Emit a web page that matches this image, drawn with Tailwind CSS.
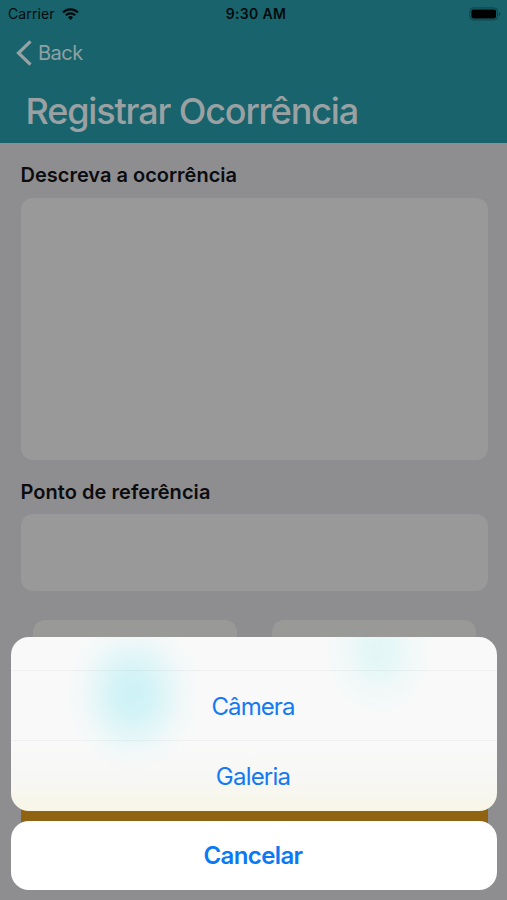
<!DOCTYPE html>
<html lang="pt-BR">
<head>
    <meta charset="UTF-8">
    <meta name="viewport" content="width=device-width, initial-scale=1.0">
    <title>Registrar Ocorrência</title>
    <script src="https://cdn.jsdelivr.net/npm/@tailwindcss/browser@4"></script>
</head>
<body class="bg-[#8e8e91] font-['Inter','Liberation_Sans',sans-serif]">
    <div class="relative w-[507px] h-[900px] overflow-hidden">
        <!-- Header -->
        <header class="h-[143px] bg-[#19646c]">
            <!-- Status bar -->
            <div class="grid grid-cols-3 items-center h-[27px] pl-2 pr-[6px] text-[14px] text-[#020b0d]">
                <div class="flex items-center gap-[7px]">
                    <span class="tracking-[0.1px]">Carrier</span>
                    <svg class="w-[17px] h-3" viewBox="0 0 17 12" fill="none" stroke="#020b0d" stroke-width="2.2">
                        <path d="M1 4.5a10.6 10.6 0 0 1 15 0"/>
                        <path d="M3.8 7.3a6.7 6.7 0 0 1 9.4 0"/>
                        <path d="M8.5 12L5.9 9.4a3.7 3.7 0 0 1 5.2 0z" fill="#020b0d" stroke="none"/>
                    </svg>
                </div>
                <span class="text-center font-semibold tracking-[0.3px] pl-[3px]">9:30 AM</span>
                <svg class="w-[32px] h-[14px] justify-self-end" viewBox="0 0 32 14">
                    <rect x="0.9" y="0.9" width="27.7" height="12" rx="3.4" fill="none" stroke="#0e4148" stroke-width="1"/>
                    <rect x="2.4" y="2.4" width="24.7" height="9" rx="1.8" fill="#000"/>
                    <path d="M30 5v4q1.4-.6 1.4-2T30 5z" fill="#0e4148"/>
                </svg>
            </div>
            <a href="#" class="flex items-center h-[51px] pl-4 gap-[6px] text-[20px] text-[#8fa0a4]">
                <svg class="w-4 h-[26px]" viewBox="0 0 16 26" fill="none" stroke="#97a2a5" stroke-width="3.2">
                    <path d="M14.5 1.4L2.5 13l12 11.6"/>
                </svg>
                <span class="tracking-[-0.5px]">Back</span>
            </a>
            <h1 class="pl-[25.5px] mt-[10px] text-[36px] leading-[46px] tracking-[-1.15px] font-[450] text-[#9ba1a3] whitespace-nowrap">Registrar Ocorrência</h1>
        </header>

        <!-- Form -->
        <main class="pl-[20.5px] pr-[19.5px] pt-[18px]">
            <h2 class="h-[28px] text-[20px] leading-[28px] font-semibold text-[#0c0c0e] whitespace-nowrap">Descreva a ocorrência</h2>
            <div class="mt-[9px] h-[262px] rounded-[12px] bg-[#999999]"></div>
            <h2 class="mt-[18px] h-[28px] text-[20px] leading-[28px] font-semibold tracking-[0.05px] text-[#0c0c0e] whitespace-nowrap">Ponto de referência</h2>
            <div class="mt-[8px] h-[77px] rounded-[12px] bg-[#999999]"></div>
            <div class="mt-[29px] flex gap-[35px] px-3">
                <div class="w-[204px] h-[160px] shrink-0 rounded-[12px] bg-[#999998]"></div>
                <div class="w-[204px] h-[160px] shrink-0 rounded-[12px] bg-[#999998]"></div>
            </div>
            <div class="mt-[22px] h-[60px] bg-[#8f6312]"></div>
        </main>

        <!-- Action sheet -->
        <div class="absolute left-[11px] top-[637px] w-[486px] flex flex-col gap-[10px] text-center text-[24px] text-[#147af3]">
            <div class="h-[174px] rounded-[18px] overflow-hidden bg-[#f9f9f9] bg-[radial-gradient(ellipse_68px_78px_at_122px_57px,#cef2f6_0%,#d3f3f7_25%,#d5f4f7a0_50%,#d5f4f730_76%,#d5f4f700_100%),radial-gradient(ellipse_54px_66px_at_367px_14px,#e3f6f5_0%,#e6f7f7_28%,#e6f7f780_55%,#e6f7f700_100%),linear-gradient(to_bottom,#f9f9f9_0%,#f9f9f9_62%,#f7f7f5_82%,#f8f6e6_100%)]">
                <div class="h-[34px] border-b border-black/4"></div>
                <div class="h-[70px] pr-[2px] leading-[71px] tracking-[-0.9px] border-b border-black/4">Câmera</div>
                <div class="h-[70px] pr-[2px] leading-[71px] tracking-[-0.8px]">Galeria</div>
            </div>
            <div class="h-[69px] pr-[2px] leading-[70px] rounded-[18px] bg-white font-semibold tracking-[-0.6px] text-[#0b79f6]">Cancelar</div>
        </div>
    </div>
</body>
</html>
